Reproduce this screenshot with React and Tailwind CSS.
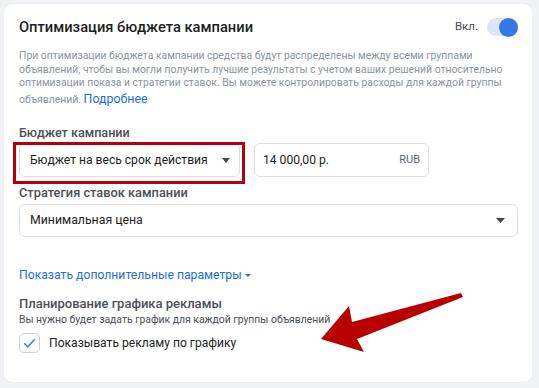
import React from "react";

function Caret({ w = 8, h = 5 }) {
  return (
    <svg width={w} height={h} viewBox={`0 0 ${w} ${h}`}>
      <path d={`M0 0h${w}L${w / 2} ${h}z`} fill="#444950" />
    </svg>
  );
}

export default function App() {
  return (
    <div className="relative w-[539px] h-[388px] bg-[#f0f2f5] p-1 font-[family-name:Roboto]">
      <div className="w-[528px] h-[378px] rounded-lg bg-white pl-[15px] pr-[14px] pt-[13px] shadow-[0_0_1px_rgba(0,0,0,0.15)]">
        <div className="flex h-[20px] items-center justify-between">
          <h1 className="text-[14.7px] leading-[20px] font-medium text-[#1c1e21]">
            Оптимизация бюджета кампании
          </h1>
          <div className="flex items-center gap-[9px]">
            <span className="text-[11.5px] text-[#444950]">Вкл.</span>
            <span className="relative flex w-[31px] h-[18px] items-center rounded-full bg-[#dce6f8]">
              <span className="absolute right-0 w-[19px] h-[19px] rounded-full bg-[#3578e5]" />
            </span>
          </div>
        </div>

        <p className="mt-[12px] text-[10.4px] leading-[13.7px] text-[#8d949e] whitespace-nowrap">
          При оптимизации бюджета кампании средства будут распределены между всеми группами
          <br />
          объявлений, чтобы вы могли получить лучшие результаты с учетом ваших решений относительно
          <br />
          оптимизации показа и стратегии ставок. Вы можете контролировать расходы для каждой группы
          <br />
          объявлений.{" "}
          <span className="text-[12.4px] leading-[17px] text-[#216fdb]">Подробнее</span>
        </p>

        <div className="mt-[18px] text-[12.6px] font-medium text-[#4b4f56] leading-[16px]">
          Бюджет кампании
        </div>
        <div className="relative mt-[2px] flex">
          <div className="flex w-[221px] h-[34px] items-center justify-between rounded-md border border-[#dddfe2] pl-[10px] pr-[9px]">
            <span className="text-[12.1px] text-[#1c1e21]">Бюджет на весь срок действия</span>
            <Caret w={8} h={5} />
          </div>
          <div className="ml-[14px] flex w-[175px] h-[34px] items-center justify-between rounded-md border border-[#dddfe2] pl-[8px] pr-[8px]">
            <span className="text-[12.1px] text-[#1c1e21]">14 000,00 р.</span>
            <span className="text-[11px] text-[#606770]">RUB</span>
          </div>
          <div className="absolute left-[-6px] top-[-1px] w-[232px] h-[42px] border-[3px] border-[#b3000c] pointer-events-none" />
        </div>

        <div className="mt-[8px] text-[12.8px] font-medium text-[#4b4f56] leading-[16px]">
          Стратегия ставок кампании
        </div>
        <div className="mt-[3px] flex h-[33px] items-center justify-between rounded-md border border-[#dddfe2] pl-[10px] pr-[12px]">
          <span className="text-[12.3px] text-[#1c1e21]">Минимальная цена</span>
          <Caret w={9} h={5} />
        </div>

        <div className="mt-[30px] flex h-[16px] items-center gap-[3px] text-[12.2px] text-[#216fdb]">
          Показать дополнительные параметры
          <svg width="6" height="3" viewBox="0 0 6 3">
            <path d="M0 0h6L3 3z" fill="#216fdb" />
          </svg>
        </div>

        <div className="mt-[13px] text-[13px] font-medium text-[#4b4f56] leading-[16px]">
          Планирование графика рекламы
        </div>
        <div className="mt-[2px] text-[10.4px] leading-[12px] text-[#4b4f56]">
          Вы нужно будет задать график для каждой группы объявлений
        </div>
        <label className="mt-[7px] flex items-center gap-[9px]">
          <span className="flex w-[21px] h-[20px] items-center justify-center rounded-[5px] border border-[#ccd0d5]">
            <svg width="13" height="10" viewBox="0 0 13 10">
              <path d="M1.2 5.2l3.6 3.6L11.8 1.2" fill="none" stroke="#3b7ee8" strokeWidth="1.5" />
            </svg>
          </span>
          <span className="text-[12.1px] text-[#1c1e21]">Показывать рекламу по графику</span>
        </label>
      </div>

      <svg className="absolute left-0 top-0 pointer-events-none" width="539" height="388">
        <path
          d="M321 339 L349 306 L352 322 L461 293 L463 297 L357 339 L364 352 Z"
          fill="#b80000"
        />
      </svg>
    </div>
  );
}
